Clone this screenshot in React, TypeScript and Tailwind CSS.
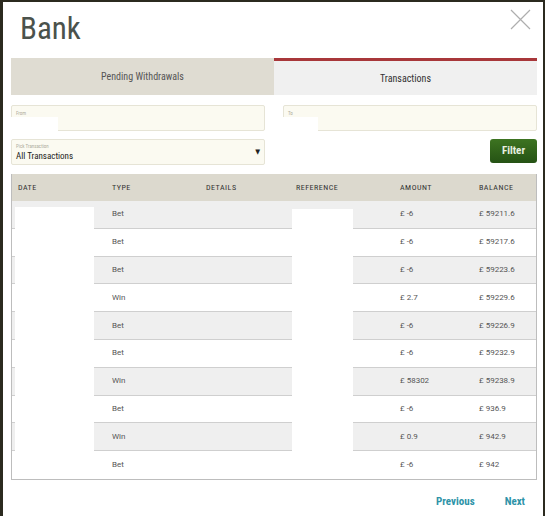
import React from 'react';

type Row = { type: string; amount: string; balance: string };

const rows: Row[] = [
  { type: 'Bet', amount: '£ -6', balance: '£ 59211.6' },
  { type: 'Bet', amount: '£ -6', balance: '£ 59217.6' },
  { type: 'Bet', amount: '£ -6', balance: '£ 59223.6' },
  { type: 'Win', amount: '£ 2.7', balance: '£ 59229.6' },
  { type: 'Bet', amount: '£ -6', balance: '£ 59226.9' },
  { type: 'Bet', amount: '£ -6', balance: '£ 59232.9' },
  { type: 'Win', amount: '£ 58302', balance: '£ 59238.9' },
  { type: 'Bet', amount: '£ -6', balance: '£ 936.9' },
  { type: 'Win', amount: '£ 0.9', balance: '£ 942.9' },
  { type: 'Bet', amount: '£ -6', balance: '£ 942' },
];

const cols = 'grid grid-cols-[94px_94px_89px_105px_79px_1fr]';
const font = "font-['Roboto_Condensed','Liberation_Sans_Narrow','DejaVu_Sans_Condensed',Roboto,sans-serif]";

function Field({ label, blank }: { label: string; blank: string }) {
  return (
    <div className="relative h-[26px] rounded-[2px] border border-[#e6e4d6] bg-[#fbfaf1]">
      <span className="absolute left-[4px] top-[5px] text-[5px] leading-none text-[#b0ae9f]">{label}</span>
      <div className={`absolute -left-px top-[11px] h-[14px] bg-white ${blank}`} />
    </div>
  );
}

export default function App() {
  return (
    <div className={`min-h-[516px] w-[545px] overflow-hidden bg-[#2b2a1f] pt-[2px] ${font}`}>
      <div className="ml-[3px] h-[514px] w-[540px] bg-white pl-[8px] pr-[6px]">
        {/* Title */}
        <div className="relative h-[56px] pt-[9px]">
          <h1 className="pl-[9px] text-[31px] font-normal leading-[36px] text-[#4b524c]">Bank</h1>
          <svg className="absolute right-[6px] top-[7px] h-[21px] w-[21px]" viewBox="0 0 21 21" stroke="#aeaeae" strokeWidth="1.2">
            <path d="M1 1L20 20M20 1L1 20" />
          </svg>
        </div>

        {/* Tabs */}
        <div className="grid h-[37px] grid-cols-2">
          <div className="flex items-center justify-center bg-[#dfdcd2] text-[10px] text-[#555]">Pending Withdrawals</div>
          <div className="flex items-center justify-center border-t-[3px] border-[#a8373a] bg-[#f0f0f0] text-[10px] text-[#333]">Transactions</div>
        </div>

        {/* Filters */}
        <div className="mt-[10px] grid grid-cols-2 gap-[18px]">
          <Field label="From" blank="w-[47px]" />
          <Field label="To" blank="w-[35px]" />
        </div>
        <div className="mt-[8px] flex items-start justify-between">
          <div className="relative h-[26px] w-[254px] rounded-[2px] border border-[#e6e4d6] bg-[#fbfaf1]">
            <span className="absolute left-[4px] top-[4px] text-[5px] leading-none text-[#b0ae9f]">Pick Transaction</span>
            <span className="absolute left-[4px] top-[11px] text-[9px] leading-[11px] text-[#222]">All Transactions</span>
            <span className="absolute right-[4px] top-[9px] text-[7px] leading-none text-[#222]">▼</span>
          </div>
          <button className="h-[24px] w-[47px] rounded-[3px] bg-gradient-to-b from-[#3d7421] to-[#255214] text-[11px] font-bold text-[#e8f0e0]">
            Filter
          </button>
        </div>

        {/* Table */}
        <div className="relative mt-[9px] border border-t-0 border-[#bdbdbd]">
          <div className={`${cols} h-[27px] items-center bg-[#dcd9ce] text-[8px] tracking-[0.5px] text-[#333]`}>
            <span className="pl-[6px]">DATE</span>
            <span className="pl-[6px]">TYPE</span>
            <span className="pl-[6px]">DETAILS</span>
            <span className="pl-[7px]">REFERENCE</span>
            <span className="pl-[6px]">AMOUNT</span>
            <span className="pl-[6px]">BALANCE</span>
          </div>
          {rows.map((r, i) => (
            <div
              key={i}
              className={`${cols} h-[27.8px] items-center font-['Roboto',sans-serif] text-[8px] text-[#555] ${i % 2 === 0 ? 'bg-[#efefef]' : 'bg-white'} ${i < rows.length - 1 ? 'border-b border-[#cfcfcf]' : ''}`}
            >
              <span />
              <span className="pl-[6px]">{r.type}</span>
              <span />
              <span />
              <span className="pl-[6px]">{r.amount}</span>
              <span className="pl-[6px]">{r.balance}</span>
            </div>
          ))}
          {/* redacted cells */}
          <div className="absolute bottom-0 left-[3px] top-[33px] w-[79px] bg-white" />
          <div className="absolute bottom-0 left-[280px] top-[35px] w-[61px] bg-white" />
        </div>

        {/* Pagination */}
        <div className="mt-[14px] flex justify-end gap-[30px] pr-[12px] text-[11px] font-bold text-[#2e93a8]">
          <span>Previous</span>
          <span>Next</span>
        </div>
      </div>
    </div>
  );
}
